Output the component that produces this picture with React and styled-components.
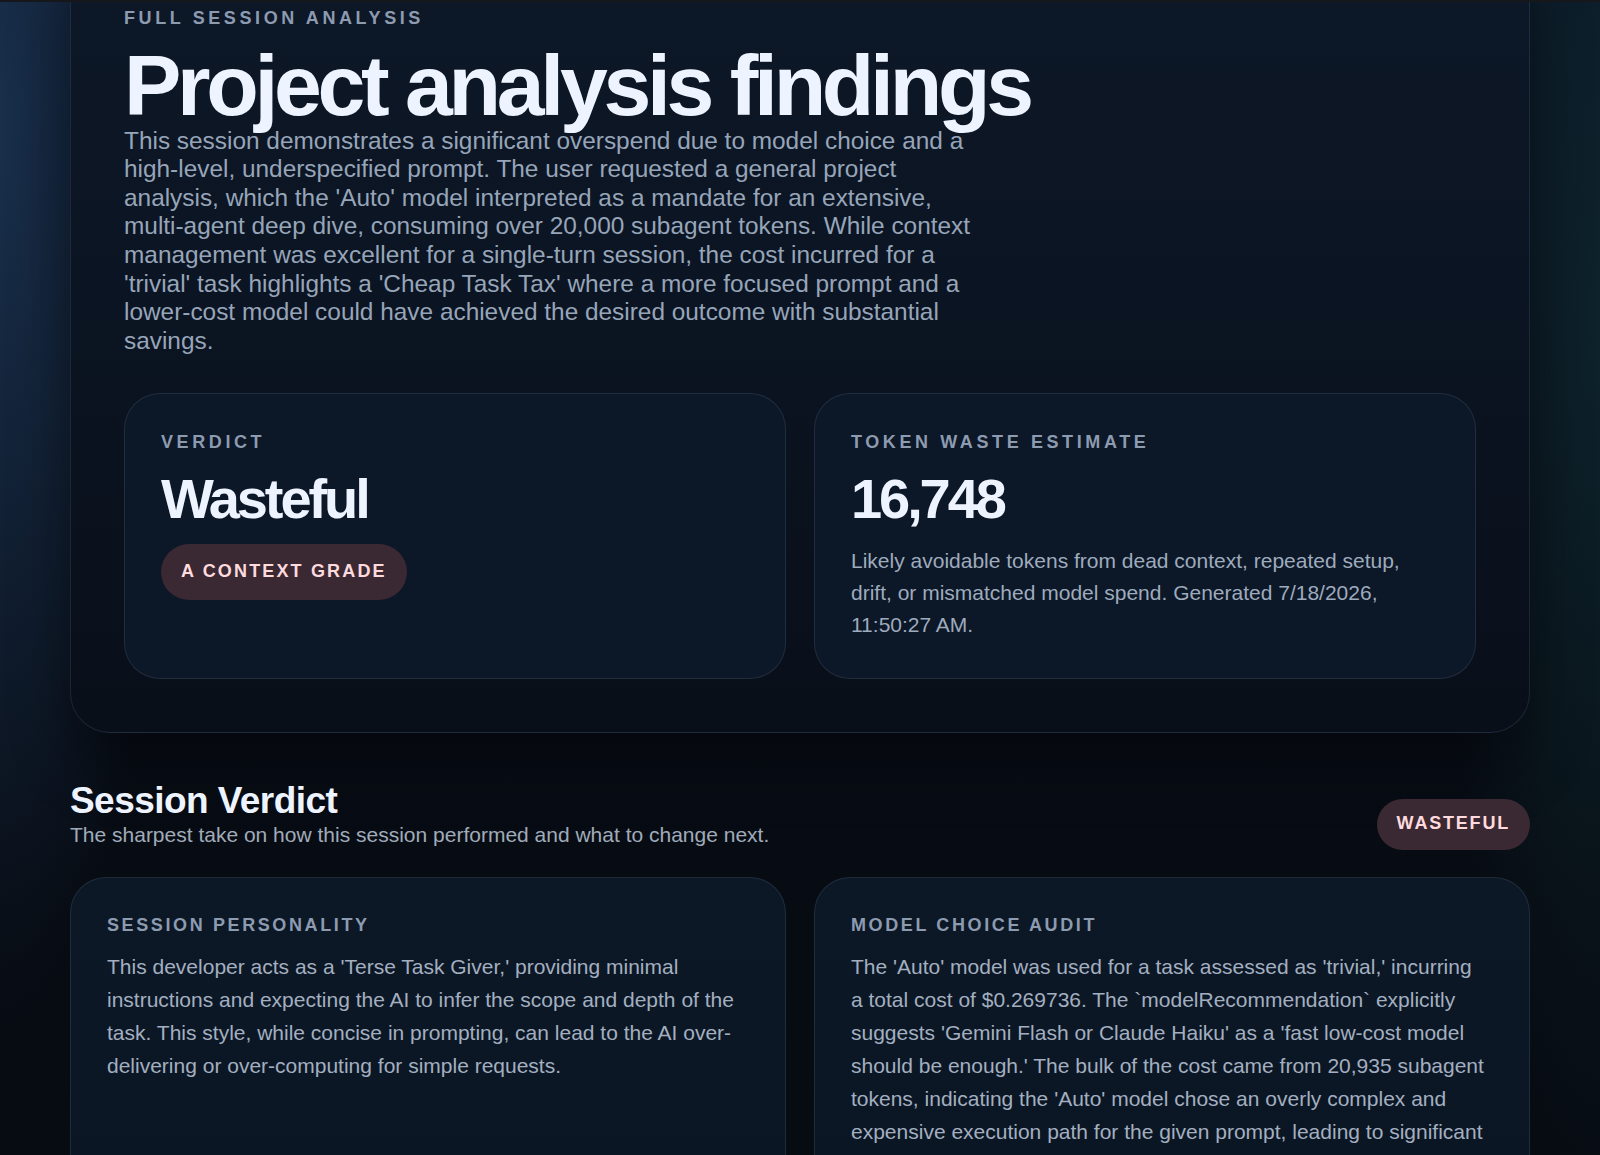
import React from "react";
import styled, { createGlobalStyle } from "styled-components";

const GlobalStyle = createGlobalStyle`
  html, body {
    margin: 0;
    padding: 0;
  }
  body {
    min-height: 100vh;
    background-color: #070b12;
    background-image:
      radial-gradient(ellipse 180px 900px at 0% 10%, rgba(38, 72, 112, 0.55), transparent 100%),
      radial-gradient(ellipse 160px 900px at 100% 25%, rgba(22, 70, 72, 0.35), transparent 100%),
      linear-gradient(180deg, #0a1322 0%, #070b12 70%, #070b12 100%);
    font-family: "Liberation Sans", Arial, Helvetica, sans-serif;
    color: #e9f0fb;
    overflow-x: hidden;
  }
  * { box-sizing: border-box; }
`;

const TopEdge = styled.div`
  position: fixed;
  top: 0;
  left: 0;
  right: 0;
  height: 2px;
  background: #15171b;
  z-index: 10;
`;

const Page = styled.main`
  width: 1460px;
  margin: -46px auto 0;
  display: flex;
  flex-direction: column;
  gap: 48px;
`;

const Hero = styled.section`
  border: 1px solid rgba(125, 145, 175, 0.17);
  border-radius: 40px;
  padding: 53px;
  background: linear-gradient(180deg, #0d1828 0%, #0b1422 45%, #090f19 100%);
  box-shadow: 0 30px 60px rgba(0, 0, 0, 0.35);
`;

const Eyebrow = styled.div`
  font-size: 18px;
  line-height: 21.6px;
  font-weight: 700;
  letter-spacing: 0.2em;
  text-transform: uppercase;
  color: #8d9bb0;
  margin-bottom: 12px;
`;

const Title = styled.h1`
  margin: 0;
  font-size: 86px;
  line-height: 1;
  font-weight: 700;
  letter-spacing: -0.05em;
  color: #eef4ff;
`;

const Lead = styled.p`
  margin: -1px 0 0;
  max-width: 865px;
  font-size: 24.4px;
  line-height: 28.6px;
  color: #97a5b9;
`;

const StatGrid = styled.div`
  margin-top: 38px;
  display: grid;
  grid-template-columns: 1fr 1fr;
  gap: 28px;
`;

const StatCard = styled.div`
  border: 1px solid rgba(130, 150, 180, 0.18);
  border-radius: 36px;
  padding: 38px 36px 36px;
  background: #0c1727;
  display: flex;
  flex-direction: column;
  align-items: flex-start;
  gap: 17px;
`;

const Label = styled.div`
  font-size: 18px;
  line-height: 21.6px;
  font-weight: 700;
  letter-spacing: ${(p) => p.$spacing || "0.2em"};
  text-transform: uppercase;
  color: #8d9bb0;
`;

const BigValue = styled.div`
  font-size: 56px;
  line-height: 1;
  font-weight: 700;
  letter-spacing: -0.055em;
  color: #eef4ff;
`;

const Pill = styled.span`
  display: inline-flex;
  align-items: center;
  border-radius: 999px;
  padding: ${(p) => (p.$tall ? "17px 20px" : "14.5px 20px")};
  background: #3a2932;
  color: #ffdade;
  font-size: 18px;
  line-height: 21.6px;
  font-weight: 700;
  letter-spacing: ${(p) => (p.$tall ? "0.12em" : "0.1em")};
  text-transform: uppercase;
  white-space: nowrap;
`;

const Desc = styled.p`
  margin: 1px 0 0;
  font-size: 21px;
  line-height: 32.2px;
  color: #9eabbd;
`;

const Section = styled.section`
  display: flex;
  flex-direction: column;
  gap: 25px;
`;

const SectionHead = styled.header`
  display: flex;
  justify-content: space-between;
  align-items: flex-end;
  padding-bottom: 2px;
`;

const HeadText = styled.div`
  display: flex;
  flex-direction: column;
`;

const SectionTitle = styled.h2`
  margin: 0;
  font-size: 37px;
  line-height: 39.6px;
  font-weight: 700;
  letter-spacing: -0.015em;
  color: #eef4ff;
`;

const SectionSub = styled.p`
  margin: 0;
  font-size: 21px;
  line-height: 29.4px;
  color: #a0abba;
`;

const CardGrid = styled.div`
  display: grid;
  grid-template-columns: 1fr 1fr;
  gap: 28px;
`;

const InfoCard = styled.article`
  border: 1px solid rgba(130, 150, 180, 0.17);
  border-radius: 36px;
  padding: 37px 42px 48px 36px;
  background: linear-gradient(180deg, #0c1826 0%, #0a1522 100%);
  display: flex;
  flex-direction: column;
  gap: 14px;
  min-height: 420px;
`;

const Body = styled.p`
  margin: 0;
  font-size: 21px;
  line-height: 33px;
  color: #a3afc0;
`;

export default function App() {
  return (
    <>
      <GlobalStyle />
      <TopEdge />
      <Page>
        <Hero>
          <Eyebrow>Full session analysis</Eyebrow>
          <Title>Project analysis findings</Title>
          <Lead>
            This session demonstrates a significant overspend due to model choice and a
            high-level, underspecified prompt. The user requested a general project
            analysis, which the 'Auto' model interpreted as a mandate for an extensive,
            multi-agent deep dive, consuming over 20,000 subagent tokens. While context
            management was excellent for a single-turn session, the cost incurred for a
            'trivial' task highlights a 'Cheap Task Tax' where a more focused prompt and a
            lower-cost model could have achieved the desired outcome with substantial
            savings.
          </Lead>
          <StatGrid>
            <StatCard>
              <Label>Verdict</Label>
              <BigValue>Wasteful</BigValue>
              <Pill $tall>A context grade</Pill>
            </StatCard>
            <StatCard>
              <Label>Token waste estimate</Label>
              <BigValue>16,748</BigValue>
              <Desc>
                Likely avoidable tokens from dead context, repeated setup, drift, or
                mismatched model spend. Generated 7/18/2026, 11:50:27 AM.
              </Desc>
            </StatCard>
          </StatGrid>
        </Hero>

        <Section>
          <SectionHead>
            <HeadText>
              <SectionTitle>Session Verdict</SectionTitle>
              <SectionSub>
                The sharpest take on how this session performed and what to change next.
              </SectionSub>
            </HeadText>
            <Pill>Wasteful</Pill>
          </SectionHead>
          <CardGrid>
            <InfoCard>
              <Label $spacing="0.145em">Session personality</Label>
              <Body>
                This developer acts as a 'Terse Task Giver,' providing minimal
                instructions and expecting the AI to infer the scope and depth of the
                task. This style, while concise in prompting, can lead to the AI
                over-delivering or over-computing for simple requests.
              </Body>
            </InfoCard>
            <InfoCard>
              <Label $spacing="0.145em">Model choice audit</Label>
              <Body>
                The 'Auto' model was used for a task assessed as 'trivial,' incurring a
                total cost of $0.269736. The `modelRecommendation` explicitly suggests
                'Gemini Flash or Claude Haiku' as a 'fast low-cost model should be
                enough.' The bulk of the cost came from 20,935 subagent tokens,
                indicating the 'Auto' model chose an overly complex and expensive
                execution path for the given prompt, leading to significant overspend.
              </Body>
            </InfoCard>
          </CardGrid>
        </Section>
      </Page>
    </>
  );
}
